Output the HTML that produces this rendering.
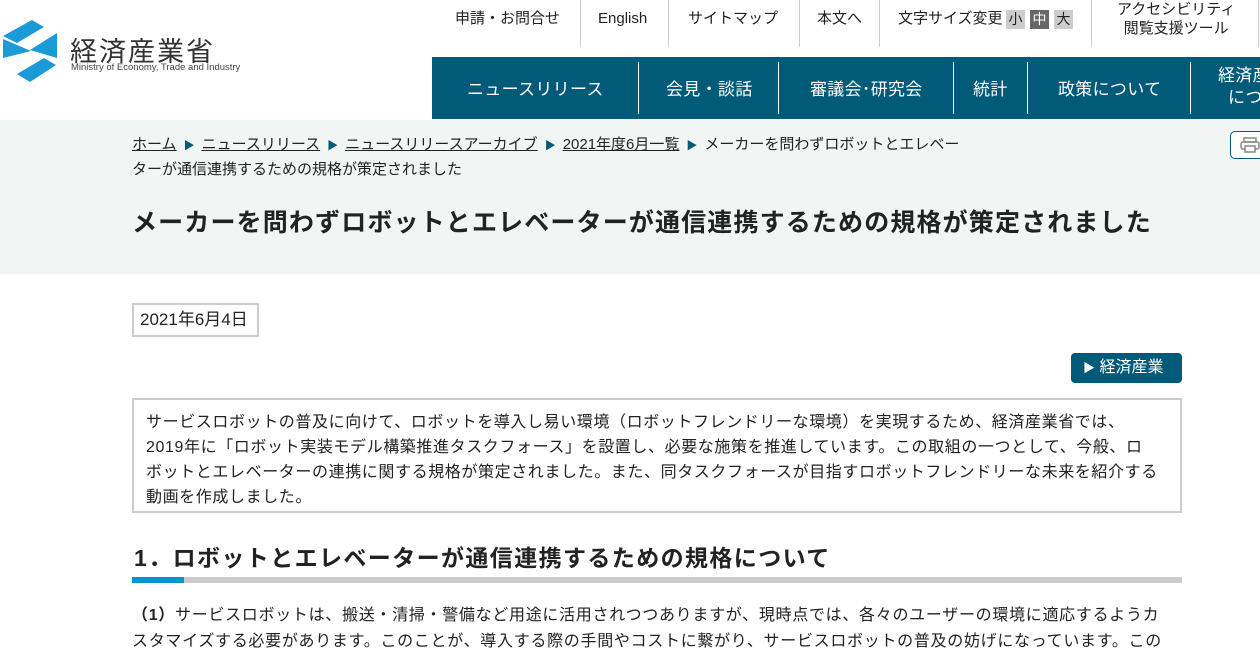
<!DOCTYPE html>
<html><head><meta charset="utf-8">
<style>
*{margin:0;padding:0;box-sizing:border-box}
body{width:1260px;height:641px;overflow:hidden;background:#fff;font-family:"Liberation Sans","Noto Sans CJK JP",sans-serif;color:#222;position:relative}
.a{position:absolute;white-space:nowrap}
.top{font-size:15px;color:#222;top:9px;line-height:20px}
.sep{position:absolute;width:1px;background:#ccc}
.nav{position:absolute;left:432px;top:57px;width:828px;height:62px;background:#005a78}
.nv{position:absolute;color:#fff;font-size:17px;top:18px;white-space:nowrap;letter-spacing:.3px}
.ns{position:absolute;top:5px;width:1px;height:52px;background:#fff}
.bc{font-size:15px;color:#222}
.bc u{text-decoration:underline}
.tri{color:#005a78;font-size:11px;margin:0 7px}
</style></head><body>
<!-- logo -->
<svg class="a" style="left:0;top:0" width="60" height="90" viewBox="0 0 60 90">
<polygon points="3,36 32,20 44,27 17,43" fill="#1a9ad6"/>
<polygon points="3,39 31,51 3,58" fill="#1a9ad6"/>
<polygon points="57,33 57,58 30,50" fill="#1a9ad6"/>
<polygon points="17,74 44,58 56,65 30,82" fill="#1a9ad6"/>
</svg>
<div class="a" style="left:70px;top:30px;font-size:27px;color:#333;letter-spacing:2px">経済産業省</div>
<div class="a" style="left:71px;top:62px;font-size:9.5px;color:#444;letter-spacing:0">Ministry of Economy, Trade and Industry</div>
<!-- top links -->
<div class="a top" style="left:455px">申請・お問合せ</div>
<div class="sep" style="left:580px;top:0;height:47px"></div>
<div class="a top" style="left:598px">English</div>
<div class="sep" style="left:668px;top:0;height:47px"></div>
<div class="a top" style="left:688px">サイトマップ</div>
<div class="sep" style="left:799px;top:0;height:47px"></div>
<div class="a top" style="left:817px">本文へ</div>
<div class="sep" style="left:879px;top:0;height:47px"></div>
<div class="a top" style="left:898px">文字サイズ変更</div>
<div class="a" style="left:1006px;top:10px;width:19px;height:19px;background:#ccc;font-size:14px;text-align:center;line-height:19px">小</div>
<div class="a" style="left:1030px;top:10px;width:19px;height:19px;background:#666;color:#fff;font-size:14px;text-align:center;line-height:19px">中</div>
<div class="a" style="left:1054px;top:10px;width:19px;height:19px;background:#ccc;font-size:14px;text-align:center;line-height:19px">大</div>
<div class="sep" style="left:1091px;top:0;height:47px"></div>
<div class="a" style="left:1117px;top:0px;font-size:15px;line-height:19px;text-align:center">アクセシビリティ<br>閲覧支援ツール</div>
<div class="sep" style="left:1258px;top:0;height:47px"></div>
<!-- nav -->
<div class="nav">
<div class="nv" style="left:35px">ニュースリリース</div>
<div class="ns" style="left:206px"></div>
<div class="nv" style="left:234px">会見・談話</div>
<div class="ns" style="left:346px"></div>
<div class="nv" style="left:378px">審議会･研究会</div>
<div class="ns" style="left:521px"></div>
<div class="nv" style="left:541px">統計</div>
<div class="ns" style="left:595px"></div>
<div class="nv" style="left:626px">政策について</div>
<div class="ns" style="left:758px"></div>
<div class="nv" style="left:786px;top:8px;line-height:22px">経済産業省<br>&nbsp;&nbsp;について</div>
</div>
<!-- gray band -->
<div class="a" style="left:0;top:120px;width:1260px;height:154px;background:#f1f5f4"></div>
<div class="a bc" style="left:132px;top:133px"><u>ホーム</u><span class="tri">▶</span><u>ニュースリリース</u><span class="tri">▶</span><u>ニュースリリースアーカイブ</u><span class="tri">▶</span><u>2021年度6月一覧</u><span class="tri">▶</span>メーカーを問わずロボットとエレベー</div>
<div class="a bc" style="left:132px;top:158px">ターが通信連携するための規格が策定されました</div>
<div class="a" style="left:1230px;top:131px;width:40px;height:28px;border:1px solid #005a78;border-radius:5px;background:#fff"></div>
<svg class="a" style="left:1240px;top:137px" width="20" height="16" viewBox="0 0 20 16"><rect x="4" y="1" width="12" height="4" fill="none" stroke="#888" stroke-width="1.5"/><rect x="1" y="5" width="18" height="7" rx="2" fill="none" stroke="#888" stroke-width="1.5"/><rect x="5" y="9" width="10" height="6" fill="#fff" stroke="#888" stroke-width="1.5"/></svg>
<div class="a" style="left:132px;top:203px;font-size:25px;font-weight:bold;color:#222;letter-spacing:1.15px">メーカーを問わずロボットとエレベーターが通信連携するための規格が策定されました</div>
<!-- date -->
<div class="a" style="left:132px;top:303px;width:127px;height:34px;border:2px solid #ccc;font-size:17px;line-height:30px;padding-left:6px">2021年6月4日</div>
<div class="a" style="left:1071px;top:353px;width:111px;height:30px;background:#005a78;border-radius:4px;color:#fff;font-size:16px;line-height:30px;padding-left:12px"><span style="font-size:12px">▶</span> 経済産業</div>
<!-- box -->
<div class="a" style="left:132px;top:398px;width:1050px;height:115px;border:2px solid #ccc;font-size:16px;line-height:25px;padding:10px 12px;letter-spacing:.6px">サービスロボットの普及に向けて、ロボットを導入し易い環境（ロボットフレンドリーな環境）を実現するため、経済産業省では、<br>2019年に「ロボット実装モデル構築推進タスクフォース」を設置し、必要な施策を推進しています。この取組の一つとして、今般、ロ<br>ボットとエレベーターの連携に関する規格が策定されました。また、同タスクフォースが目指すロボットフレンドリーな未来を紹介する<br>動画を作成しました。</div>
<!-- heading -->
<div class="a" style="left:134px;top:539px;font-size:23px;font-weight:bold;color:#222;letter-spacing:1.4px">1．ロボットとエレベーターが通信連携するための規格について</div>
<div class="a" style="left:132px;top:577px;width:1050px;height:6px;background:#ccc"></div>
<div class="a" style="left:132px;top:577px;width:52px;height:6px;background:#0094d0"></div>
<div class="a" style="left:132px;top:603px;font-size:16px;line-height:26px;letter-spacing:.7px"><b>（1）</b>サービスロボットは、搬送・清掃・警備など用途に活用されつつありますが、現時点では、各々のユーザーの環境に適応するようカ<br>スタマイズする必要があります。このことが、導入する際の手間やコストに繋がり、サービスロボットの普及の妨げになっています。この</div>
</body></html>
